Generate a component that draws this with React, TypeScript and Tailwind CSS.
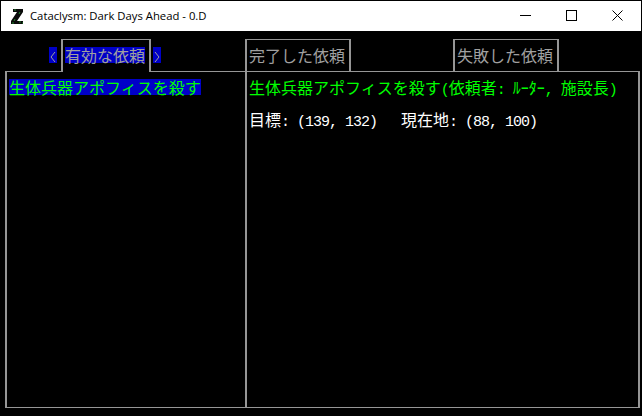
const cjk = "font-['Noto_Sans_CJK_JP','Noto_Sans_CJK_SC',sans-serif] text-[16px] leading-4";
const mono = "font-['Liberation_Mono',monospace] text-[15px] tracking-[-1px] leading-4";
const line = "border-[#969696]";

function Mono({ children }: { children: string }) {
  return <span className={`${mono} whitespace-pre`}>{children}</span>;
}

function Logo() {
  return (
    <svg width="13" height="17" viewBox="0 0 13 17" className="shrink-0">
      <path d="M2 1h10v3L6 13h6v3H0v-3l6-9H2z" fill="#0a0a0a" />
      <path d="M3 2h2M9 4l-1 2M4 11l-1 2M8 14h2M1 15h2M11 15h1" stroke="#1f8a2a" strokeWidth="1" />
    </svg>
  );
}

function TitleBar() {
  return (
    <div className="h-[30px] bg-white flex items-center shrink-0">
      <div className="ml-[10px] w-[19px]">
        <Logo />
      </div>
      <span className="font-['Open_Sans',sans-serif] text-[11.3px] text-black">Cataclysm: Dark Days Ahead - 0.D</span>
      <div className="ml-auto flex items-center">
        <svg width="46" height="30" viewBox="0 0 46 30"><path d="M17 14.5h11" stroke="#000" /></svg>
        <svg width="46" height="30" viewBox="0 0 46 30"><rect x="17.5" y="9.5" width="10" height="10" fill="none" stroke="#000" /></svg>
        <svg width="46" height="30" viewBox="0 0 46 30"><path d="M17.5 9.5l10 10M27.5 9.5l-10 10" stroke="#000" /></svg>
      </div>
    </div>
  );
}

function Chevron({ points }: { points: string }) {
  return (
    <svg width="8" height="16" viewBox="0 0 8 16" className="mt-[8px] bg-[#0000c8]">
      <polyline points={points} fill="none" stroke="#a0a0a0" strokeWidth="1" />
    </svg>
  );
}

function Tab({ label, active }: { label: string; active?: boolean }) {
  return (
    <div
      className={`border-x-2 border-t ${line} px-[2px] pt-[7px] text-[#a0a0a0] ${cjk} ${
        active ? "relative z-10 bg-black h-[33px] -mb-px w-[90px]" : "h-[32px] w-[106px]"
      }`}
    >
      <span className={`block w-fit ${active ? "bg-[#0000c8]" : ""}`}>{label}</span>
    </div>
  );
}

export default function App() {
  return (
    <div className="w-[642px] h-[416px] bg-black p-px flex flex-col overflow-hidden">
      <TitleBar />
      <div className="flex-1 flex flex-col pt-2 pl-1 pr-px pb-[7px] min-h-0">
        <div className="flex h-[32px] pl-[44px] shrink-0">
          <Chevron points="6,5 2,10 6,15" />
          <div className="ml-1">
            <Tab label="有効な依頼" active />
          </div>
          <div className="ml-[2px]">
            <Chevron points="2,5 6,10 2,15" />
          </div>
          <div className="ml-[84px]">
            <Tab label="完了した依頼" />
          </div>
          <div className="ml-[102px]">
            <Tab label="失敗した依頼" />
          </div>
        </div>
        <div className={`flex-1 flex border-x-2 border-y ${line} min-h-0`}>
          <div className={`w-[240px] border-r-2 ${line} pl-[2px] pt-[7px] shrink-0`}>
            <div className={`w-[192px] h-4 bg-[#0000c8] text-[#00ff00] ${cjk}`}>生体兵器アポフィスを殺す</div>
          </div>
          <div className={`flex-1 pl-[2px] pt-[7px] ${cjk}`}>
            <div className="h-4 text-[#00ff00] whitespace-nowrap">
              生体兵器アポフィスを殺す<Mono>(</Mono>依頼者<Mono>: </Mono>ﾙｰﾀｰ<Mono>, </Mono>施設長<Mono>)</Mono>
            </div>
            <div className="h-4 mt-4 text-white whitespace-nowrap">
              目標<Mono>: (139, 132)   </Mono>現在地<Mono>: (88, 100)</Mono>
            </div>
          </div>
        </div>
      </div>
    </div>
  );
}
